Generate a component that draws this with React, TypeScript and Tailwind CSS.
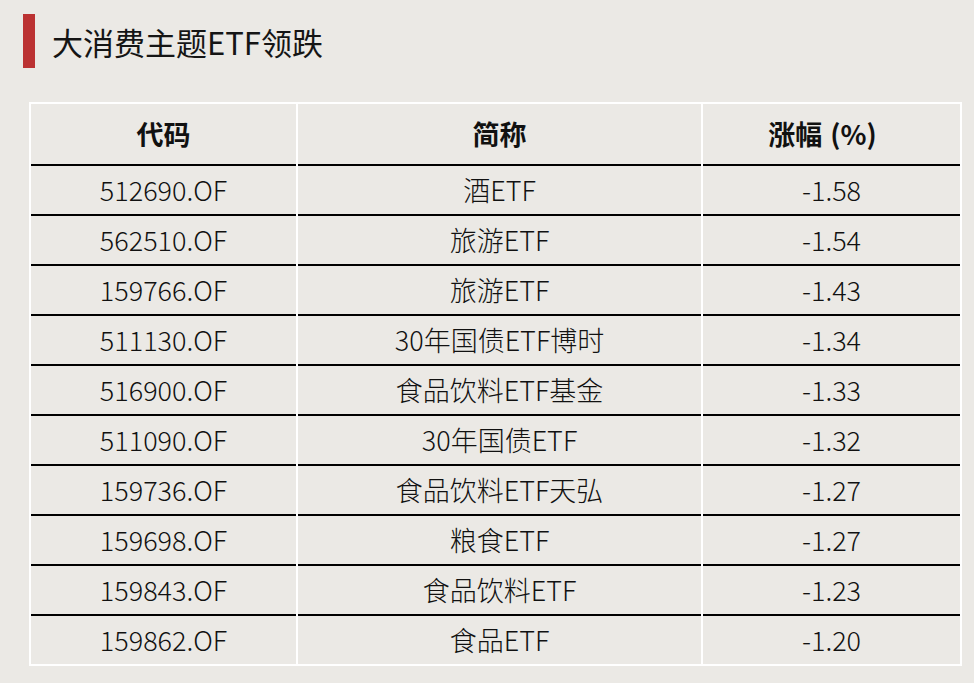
import React from "react";

const rows: [string, string, string][] = [
  ["512690.OF", "酒ETF", "-1.58"],
  ["562510.OF", "旅游ETF", "-1.54"],
  ["159766.OF", "旅游ETF", "-1.43"],
  ["511130.OF", "30年国债ETF博时", "-1.34"],
  ["516900.OF", "食品饮料ETF基金", "-1.33"],
  ["511090.OF", "30年国债ETF", "-1.32"],
  ["159736.OF", "食品饮料ETF天弘", "-1.27"],
  ["159698.OF", "粮食ETF", "-1.27"],
  ["159843.OF", "食品饮料ETF", "-1.23"],
  ["159862.OF", "食品ETF", "-1.20"],
];

const font = { fontFamily: '"Noto Sans CJK SC", "Noto Sans", sans-serif' };

export default function App() {
  return (
    <div className="w-[974px] h-[683px] bg-[#ebe9e5] text-[#111]" style={font}>
      <div className="flex items-center pl-[23px] pt-[14px]">
        <div className="w-[12px] h-[54px] bg-[#bb3232]" />
        <div className="ml-[17px] text-[31px] leading-none text-[#151515]">大消费主题ETF领跌</div>
      </div>
      <div className="ml-[29px] mt-[34px] w-[933px] bg-white p-[2px]">
        <div className="grid grid-cols-[265px_403px_257px] gap-x-[2px]">
          <div className="h-[60px] bg-[#ebe9e5] flex items-center justify-center text-[27px] font-bold">代码</div>
          <div className="h-[60px] bg-[#ebe9e5] flex items-center justify-center text-[27px] font-bold">简称</div>
          <div className="h-[60px] bg-[#ebe9e5] flex items-center justify-center text-[27px] font-bold pr-[18px]">
            涨幅<span className="ml-[8px]">(%)</span>
          </div>
          {rows.map((r) => (
            <React.Fragment key={r[0] + r[1]}>
              {r.map((c, i) => (
                <div
                  key={i}
                  className="h-[50px] border-t-2 border-black bg-[#ebe9e5] flex items-center justify-center text-[27px] leading-none font-light pb-[2px]"
                >
                  {c}
                </div>
              ))}
            </React.Fragment>
          ))}
        </div>
      </div>
    </div>
  );
}
